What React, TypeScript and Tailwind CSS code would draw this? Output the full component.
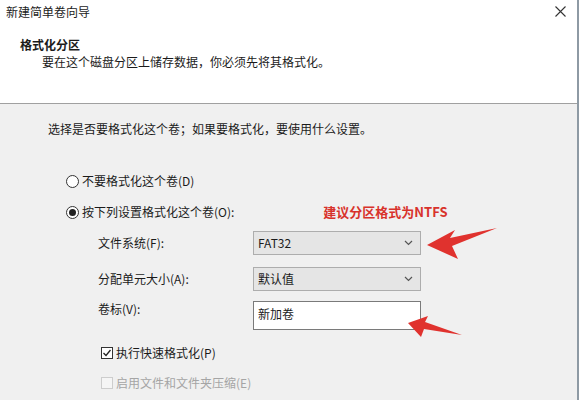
import React from "react";

const font = { fontFamily: '"Noto Sans CJK SC", "Noto Sans", sans-serif' };

function Radio({ checked, label, className }: { checked?: boolean; label: string; className?: string }) {
  return (
    <div className={"flex items-center " + (className ?? "")}>
      <span className="w-[13px] h-[13px] rounded-full border border-[#333] bg-white flex items-center justify-center">
        {checked && <span className="w-[7px] h-[7px] rounded-full bg-[#222]" />}
      </span>
      <span className="ml-[3px]">{label}</span>
    </div>
  );
}

function Select({ value }: { value: string }) {
  return (
    <div className="w-[168px] h-[24px] border border-[#adadad] bg-[#e5e5e5] flex items-center justify-between pl-[4px] pr-[7px]">
      <span>{value}</span>
      <svg width="9" height="6" viewBox="0 0 9 6" fill="none" stroke="#555" strokeWidth="1.2">
        <path d="M1 1 L4.5 4.5 L8 1" />
      </svg>
    </div>
  );
}

function Field({ label, children, className }: { label: string; children: React.ReactNode; className?: string }) {
  return (
    <div className={"flex items-center " + (className ?? "")}>
      <span className="w-[155px] pl-[98px] box-content -ml-[98px] shrink-0">{label}</span>
      {children}
    </div>
  );
}

export default function App() {
  return (
    <div className="relative w-[581px] h-[400px] overflow-hidden bg-white text-[12px] leading-[16px] text-[#1b1b1b]" style={font}>
      <div className="w-[579px] h-full border-r-2 border-[#8e9aa4] flex flex-col">
        {/* header */}
        <div className="h-[104px] bg-white border-b border-[#a0a0a0] shrink-0">
          <div className="flex items-start justify-between pl-[6px] pr-[11px] pt-[4px] h-[30px]">
            <span>新建简单卷向导</span>
            <svg width="11" height="11" viewBox="0 0 11 11" stroke="#333" strokeWidth="1.1" className="mt-[2px]">
              <path d="M0.5 0.5 L10.5 10.5 M10.5 0.5 L0.5 10.5" />
            </svg>
          </div>
          <div className="pl-[20px] pt-[7px] font-bold">格式化分区</div>
          <div className="pl-[42px] pt-[1px]">要在这个磁盘分区上储存数据，你必须先将其格式化。</div>
        </div>

        {/* body */}
        <div className="flex-1 bg-[#f0f0f0] pl-[48px]">
          <div className="pt-[17px]">选择是否要格式化这个卷；如果要格式化，要使用什么设置。</div>
          <div className="pl-[18px]">
            <Radio label="不要格式化这个卷(D)" className="mt-[36px]" />
            <div className="flex items-center mt-[15px]">
              <Radio checked label="按下列设置格式化这个卷(O):" />
              <span className="ml-[89px] text-[13px] font-bold text-[#d8322b]">建议分区格式为NTFS</span>
            </div>
          </div>
          <div className="pl-[50px]">
            <Field label="文件系统(F):" className="mt-[11px]">
              <Select value="FAT32" />
            </Field>
            <Field label="分配单元大小(A):" className="mt-[12px]">
              <Select value="默认值" />
            </Field>
            <Field label="卷标(V):" className="mt-[10px] items-start">
              <div className="w-[168px] h-[29px] border border-[#7a7a7a] bg-white pl-[4px] pt-[4px]">新加卷</div>
            </Field>
            <div className="flex items-center mt-[15px] pl-[3px]">
              <span className="w-[12px] h-[12px] border border-[#333] bg-white flex items-center justify-center">
                <svg width="10" height="10" viewBox="0 0 10 10" fill="none" stroke="#222" strokeWidth="1.3">
                  <path d="M1.5 5 L4 7.5 L8.5 2" />
                </svg>
              </span>
              <span className="ml-[3px]">执行快速格式化(P)</span>
            </div>
            <div className="flex items-center mt-[14px] pl-[3px] text-[#a5a5a5]">
              <span className="w-[12px] h-[12px] border border-[#cdcdcd] bg-[#f5f5f5]" />
              <span className="ml-[3px]">启用文件和文件夹压缩(E)</span>
            </div>
          </div>
        </div>
      </div>

      {/* annotation arrows */}
      <svg className="absolute left-0 top-0 pointer-events-none" width="581" height="400">
        <polygon points="427,245 455,230 450,238 497,228 452,246 458,259" fill="#e0322e" />
        <polygon points="408,323 428,316 425,322 462,335 424,329 421,337" fill="#e0322e" />
      </svg>
    </div>
  );
}
